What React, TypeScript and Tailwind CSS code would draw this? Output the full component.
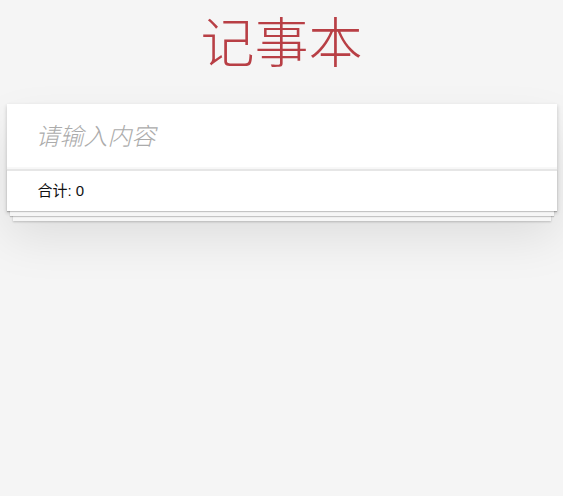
import React, { useState } from 'react';

const App = () => {
  const [text, setText] = useState('');
  const [notes] = useState<string[]>([]);

  return (
    <div className="min-h-screen bg-[#f5f5f5] font-['Liberation_Sans','Noto_Sans_CJK_SC',sans-serif]">
      <div className="mx-auto max-w-[550px] pt-[5px]">
        {/* Title */}
        <h1 className="h-[78px] text-center text-[54px] leading-[78px] font-light text-[#b83f45]">
          记事本
        </h1>

        {/* Notepad card */}
        <section className="mt-[21px] bg-white shadow-[0_2px_4px_0_rgba(0,0,0,0.2),0_25px_50px_0_rgba(0,0,0,0.1)]">
          <input
            type="text"
            value={text}
            onChange={(e) => setText(e.target.value)}
            placeholder="请输入内容"
            className="block h-[65px] w-full bg-white pl-[29px] pr-4 text-[24px] italic font-light text-[#4d4d4d] outline-none placeholder:text-[#ababab] shadow-[inset_0_-2px_1px_rgba(0,0,0,0.03)]"
          />

          {/* Footer */}
          <footer className="flex h-[42px] items-center border-t-2 border-[#e6e6e6] pl-[31px] text-[15px] text-[#111] shadow-[0_1px_1px_rgba(0,0,0,0.2),0_8px_0_-3px_#f6f6f6,0_9px_1px_-3px_rgba(0,0,0,0.2),0_16px_0_-6px_#f6f6f6,0_17px_2px_-6px_rgba(0,0,0,0.2)]">
            <span>合计: {notes.length}</span>
          </footer>
        </section>
      </div>
    </div>
  );
};

export default App;
